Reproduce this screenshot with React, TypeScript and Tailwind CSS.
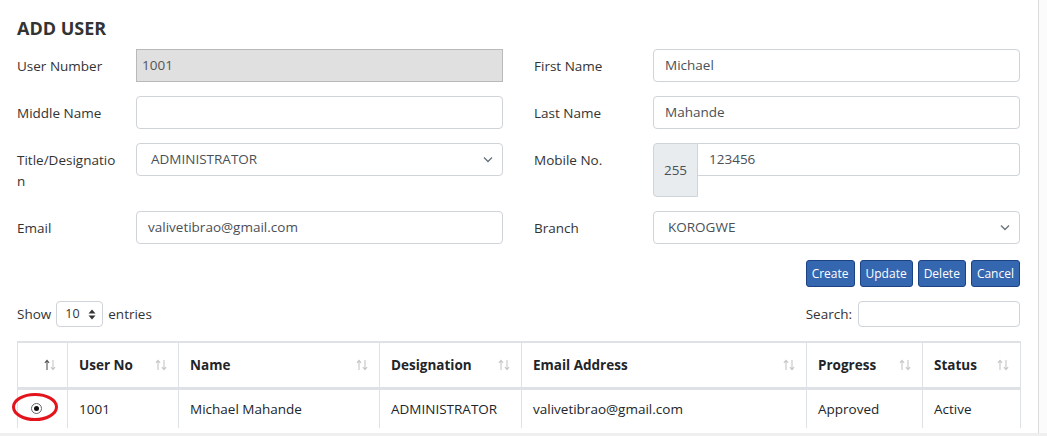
import React from "react";

const font = "font-['Open_Sans',sans-serif]";

function Chevron() {
  return (
    <svg width="10" height="7" viewBox="0 0 10 7" className="shrink-0">
      <path d="M1 1.5l4 4 4-4" fill="none" stroke="#6c757d" strokeWidth="1.4" />
    </svg>
  );
}

function SortArrows({ active = false }: { active?: boolean }) {
  return (
    <svg width="12" height="12" viewBox="0 0 12 12" className="ml-auto shrink-0">
      <path d="M3 11V1.5M0.9 3.8L3 1.4L5.1 3.8" fill="none" stroke={active ? "#555" : "#c6c6c6"} strokeWidth="1.1" />
      <path d="M9 1V10.5M6.9 8.2L9 10.6L11.1 8.2" fill="none" stroke="#c6c6c6" strokeWidth="1.1" />
    </svg>
  );
}

function Label({ children }: { children: React.ReactNode }) {
  return (
    <div className="w-[119px] shrink-0 pt-[7px] leading-[21px] text-[#333]">{children}</div>
  );
}

function TextInput({ value = "" }: { value?: string }) {
  return (
    <div className="flex-1 h-[33px] flex items-center px-[11px] border border-[#ced4da] rounded-[4px] bg-white text-[#495057]">
      {value}
    </div>
  );
}

function SelectBox({ value }: { value: string }) {
  return (
    <div className="flex-1 h-[33px] flex items-center pl-[14px] pr-[9px] border border-[#ced4da] rounded-[4px] bg-white text-[#495057]">
      <span className="flex-1">{value}</span>
      <Chevron />
    </div>
  );
}

const columns = [
  { title: "", w: "w-[50px]", active: true },
  { title: "User No", w: "w-[111px]" },
  { title: "Name", w: "w-[201px]" },
  { title: "Designation", w: "w-[142px]" },
  { title: "Email Address", w: "w-[285px]" },
  { title: "Progress", w: "w-[116px]" },
  { title: "Status", w: "w-[98px]" },
];

const row = ["", "1001", "Michael Mahande", "ADMINISTRATOR", "valivetibrao@gmail.com", "Approved", "Active"];

export default function App() {
  return (
    <div className={`w-[1047px] h-[436px] bg-white overflow-hidden text-[13.5px] ${font}`}>
      <div className="flex h-[433px]">
        <div className="w-[1039px] border-r border-[#dcdcdc] pl-[17px] pr-[18px] pt-[16px]">
          <h1 className="text-[18px] leading-[24px] font-bold text-[#333]">ADD USER</h1>

          {/* form */}
          <div className="mt-[9px] grid grid-cols-2 gap-x-[31px] gap-y-[14px]">
            <div className="flex">
              <Label>User Number</Label>
              <div className="flex-1 h-[33px] flex items-center px-[5px] border border-[#b9b9b9] bg-[#e0e0e0] text-[#555]">
                1001
              </div>
            </div>
            <div className="flex">
              <Label>First Name</Label>
              <TextInput value="Michael" />
            </div>

            <div className="flex">
              <Label>Middle Name</Label>
              <TextInput />
            </div>
            <div className="flex">
              <Label>Last Name</Label>
              <TextInput value="Mahande" />
            </div>

            <div className="flex items-start">
              <Label>
                Title/Designatio
                <br />n
              </Label>
              <SelectBox value="ADMINISTRATOR" />
            </div>
            <div className="flex items-start">
              <Label>Mobile No.</Label>
              <div className="flex-1 flex items-start">
                <div className="w-[45px] h-[54px] flex items-center justify-center border border-[#ced4da] rounded-l-[4px] bg-[#e9ecef] text-[#495057] pt-[1px]">
                  255
                </div>
                <div className="flex-1 h-[33px] flex items-center px-[11px] border border-l-0 border-[#ced4da] rounded-r-[4px] text-[#495057]">
                  123456
                </div>
              </div>
            </div>

            <div className="flex">
              <Label>Email</Label>
              <TextInput value="valivetibrao@gmail.com" />
            </div>
            <div className="flex">
              <Label>Branch</Label>
              <SelectBox value="KOROGWE" />
            </div>
          </div>

          {/* actions */}
          <div className="mt-[16px] flex justify-end gap-[5px]">
            {["Create", "Update", "Delete", "Cancel"].map((b) => (
              <button
                key={b}
                className="h-[27px] px-[5px] rounded-[3px] border border-[#1b4283] bg-[#3566b0] text-white text-[12px] leading-none"
              >
                {b}
              </button>
            ))}
          </div>

          {/* table controls */}
          <div className="mt-[14px] flex items-center justify-between text-[#333]">
            <div className="flex items-center gap-[5px]">
              <span>Show</span>
              <div className="w-[47px] h-[26px] flex items-center pl-[8px] pr-[6px] border border-[#ced4da] rounded-[4px] text-[12.5px]">
                <span className="flex-1">10</span>
                <svg width="8" height="11" viewBox="0 0 8 11">
                  <path d="M4 0.5L7.5 4.5H0.5Z M4 10.5L7.5 6.5H0.5Z" fill="#333" />
                </svg>
              </div>
              <span>entries</span>
            </div>
            <div className="flex items-center gap-[6px]">
              <span>Search:</span>
              <div className="w-[162px] h-[26px] border border-[#ced4da] rounded-[4px]" />
            </div>
          </div>

          {/* table */}
          <div className="relative mt-[14px]">
            <table className="w-[1003px] table-fixed border-collapse">
              <thead>
                <tr>
                  {columns.map((c, i) => (
                    <th
                      key={i}
                      className={`${c.w} h-[46px] border border-[#dee2e6] border-t-2 border-b-[3px] px-[11px] text-left font-bold text-[#212529]`}
                    >
                      <div className="flex items-center">
                        <span>{c.title}</span>
                        <SortArrows active={c.active} />
                      </div>
                    </th>
                  ))}
                </tr>
              </thead>
              <tbody>
                <tr>
                  {row.map((v, i) => (
                    <td key={i} className="h-[40px] border-x border-[#dee2e6] px-[11px] text-[#212529]">
                      {i === 0 ? (
                        <div className="ml-[2px] w-[11px] h-[11px] rounded-full border border-[#666] flex items-center justify-center">
                          <div className="w-[5px] h-[5px] rounded-full bg-[#111]" />
                        </div>
                      ) : (
                        v
                      )}
                    </td>
                  ))}
                </tr>
              </tbody>
            </table>
            {/* red annotation */}
            <svg className="absolute left-[-6px] top-[50px] pointer-events-none" width="48" height="32" viewBox="0 0 48 32">
              <ellipse cx="24" cy="16" rx="21.5" ry="12.5" fill="none" stroke="#e3141b" strokeWidth="3" />
            </svg>
          </div>
        </div>
        <div className="flex-1 bg-[#fbfbfb]" />
      </div>
      <div className="h-[3px] bg-[#efefef]" />
    </div>
  );
}
